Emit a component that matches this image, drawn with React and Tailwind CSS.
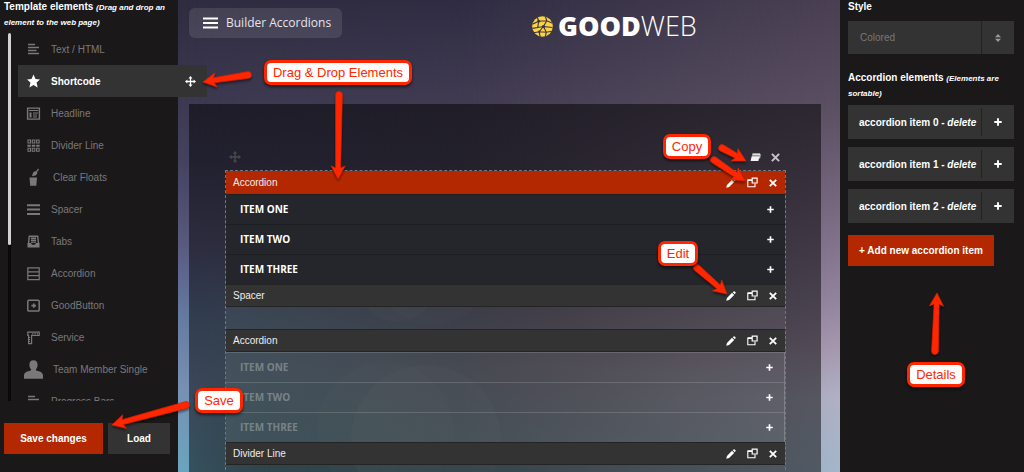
import React from "react";

const SANS = "font-['Liberation_Sans',Arial,sans-serif]";
const OPEN = "font-['Open_Sans','Noto_Sans',sans-serif]";

/* ---------- icons ---------- */

function MoveIcon({ className }) {
  return (
    <svg viewBox="0 0 12 12" className={className} fill="currentColor" aria-hidden="true">
      <path d="M6 0 8.2 2.6H6.7V5.3H9.4V3.8L12 6 9.4 8.2V6.7H6.7V9.4H8.2L6 12 3.8 9.4H5.3V6.7H2.6V8.2L0 6 2.6 3.8V5.3H5.3V2.6H3.8Z" />
    </svg>
  );
}

function PlusIcon({ className }) {
  return (
    <svg viewBox="0 0 8 8" className={className} stroke="currentColor" strokeWidth="1.9" aria-hidden="true">
      <path d="M4 .3V7.7M.3 4H7.7" />
    </svg>
  );
}

function CloseIcon({ className }) {
  return (
    <svg viewBox="0 0 8 8" className={className} stroke="currentColor" strokeWidth="1.8" aria-hidden="true">
      <path d="M.8.8 7.2 7.2M7.2.8.8 7.2" />
    </svg>
  );
}

function PencilIcon() {
  return (
    <svg viewBox="0 0 10 10" className="size-[10px]" fill="currentColor" aria-hidden="true">
      <path d="M.2 9.8 1 6.9 6 1.8 8.2 3.9 3.1 9ZM6.7 1.2 7.6.5Q8.3 0 9 .7L9.4 1.1Q10 1.7 9.5 2.3L8.8 3.2Z" />
    </svg>
  );
}

function DuplicateIcon() {
  return (
    <svg viewBox="0 0 11 11" className="size-[11px]" fill="none" stroke="currentColor" aria-hidden="true">
      <path d="M5 3H.8V9.8H8V6.6" strokeWidth="1.1" />
      <path d="M.8 3.2H5" strokeWidth="1.6" />
      <path d="M5.2 1.2H10.1V6H5.2Z" strokeWidth="1.2" />
    </svg>
  );
}

function StackIcon() {
  return (
    <svg viewBox="0 0 11 10" className="h-[10px] w-[11px]" aria-hidden="true">
      <path d="M2.5 1H10.2L9.5 5H1.8Z" fill="#9a979d" />
      <path d="M1.6 4.4H9.4L8.4 9H.6Z" fill="#f4f4f4" />
      <path d="M2.7 2.4H10.2L9.6 6.4" fill="none" stroke="#e8e8e8" strokeWidth="1" />
    </svg>
  );
}

const elementIcons = {
  text: (
    <path d="M4 4.5H11M4 7.5H15M4 10.5H12.5M4 13.5H15" stroke="currentColor" strokeWidth="1.5" />
  ),
  star: (
    <path
      d="M9.5 2.6 11.5 7 16 7.5 12.6 10.6 13.6 15.4 9.5 12.9 5.4 15.4 6.4 10.6 3 7.5 7.5 7Z"
      fill="currentColor"
    />
  ),
  headline: (
    <g fill="none" stroke="currentColor">
      <path d="M3.6 4.1H15.4V15.1H3.6Z" strokeWidth="1.4" />
      <path d="M5 6.5H14M9 9H14M9 11H13M9 13H13" strokeWidth="1.2" />
      <path d="M6.5 8.5V13.5" strokeWidth="2" />
    </g>
  ),
  divider: (
    <g fill="none" stroke="currentColor">
      <path d="M4 4H6.5V7H4ZM8.3 4H10.8V7H8.3ZM12.6 4H15.1V7H12.6ZM4 12.3H6.5V15.3H4ZM8.3 12.3H10.8V15.3H8.3ZM12.6 12.3H15.1V15.3H12.6Z" strokeWidth="1.1" />
      <path d="M3.4 9.7H15.6" strokeWidth="2" strokeDasharray="3.4 1" />
    </g>
  ),
  clear: (
    <g fill="currentColor">
      <path d="M5.5 9.5H13L12.3 17.8H6.2Z" />
      <path d="M8 8.2 9 4.8 11 2.9 12 3.6 14 .6 15 1.4 13 4.3 13.4 5.6 11.6 7.4Z" />
    </g>
  ),
  spacer: (
    <path d="M3 5.2H16M3 9.6H16M3 14H16" stroke="currentColor" strokeWidth="2" />
  ),
  tabs: (
    <g fill="none" stroke="currentColor">
      <path d="M4.5 12 5.3 4.2H13.7L14.5 12" strokeWidth="1.4" />
      <path d="M7 6.3H12M7 8.2H12M7 10.1H12" strokeWidth="1.4" />
      <path d="M3.5 11H7L8 12.8H11L12 11H15.5V15.6H3.5Z" fill="currentColor" stroke="none" />
    </g>
  ),
  accordion: (
    <path
      d="M3.8 3.9H15.2V15.6H3.8ZM3.8 7.8H15.2M3.8 11.7H15.2"
      fill="none"
      stroke="currentColor"
      strokeWidth="1.2"
    />
  ),
  button: (
    <g fill="none" stroke="currentColor">
      <rect x="3.8" y="4.3" width="11.4" height="10.8" rx="1.2" strokeWidth="1.5" />
      <path d="M7.4 9.7H12M9.8 7.6V11.8" strokeWidth="1.7" />
    </g>
  ),
  service: (
    <g fill="none" stroke="currentColor">
      <path d="M3.8 4.2H15.2V7.4H7.6V15.6H4.6V7.4H3.8Z" strokeWidth="1.2" />
      <path d="M4.6 9.5H7M4.6 11.5H7M4.6 13.5H7M8 5.8H14" strokeWidth="1.1" strokeDasharray="1.4 1" />
    </g>
  ),
  person: (
    <path
      d="M9.5.2C12.3.2 13.7 2.2 13.6 5 13.5 7 12.8 8.4 12 9.2V10.6C15.6 11.4 19 12.4 19 15.5V18.8H0V15.5C0 12.4 3.4 11.4 7 10.6V9.2C6.2 8.4 5.5 7 5.4 5 5.3 2.2 6.7.2 9.5.2Z"
      fill="currentColor"
    />
  ),
  progress: (
    <path d="M4 4.5H11M4 7.5H15M4 10.5H12.5M4 13.5H15" stroke="currentColor" strokeWidth="1.5" />
  ),
};

/* ---------- left sidebar ---------- */

const elements = [
  { icon: "text", label: "Text / HTML" },
  { icon: "star", label: "Shortcode", active: true },
  { icon: "headline", label: "Headline" },
  { icon: "divider", label: "Divider Line" },
  { icon: "clear", label: "Clear Floats", wide: true },
  { icon: "spacer", label: "Spacer" },
  { icon: "tabs", label: "Tabs" },
  { icon: "accordion", label: "Accordion" },
  { icon: "button", label: "GoodButton" },
  { icon: "service", label: "Service" },
  { icon: "person", label: "Team Member Single", wide: true },
  { icon: "progress", label: "Progress Bars" },
];

function ElementRow({ icon, label, active, wide }) {
  const tone = active
    ? "w-full bg-[#333333] pr-[11px] font-bold text-white"
    : "w-[160px] text-[#7a7879]";
  return (
    <li>
      <button type="button" className={`flex h-[32px] items-center pl-[6px] text-left text-[10px] ${tone}`}>
        <svg viewBox="0 0 19 19" className="size-[19px] shrink-0" aria-hidden="true">
          {elementIcons[icon]}
        </svg>
        <span className={wide ? "ml-[10px]" : "ml-[8px]"}>{label}</span>
        {active && <MoveIcon className="ml-auto size-[11px]" />}
      </button>
    </li>
  );
}

function ElementsSidebar() {
  return (
    <aside className="relative z-10 flex w-[178px] shrink-0 flex-col bg-[#1a1819]">
      <h2 className="px-[4px] text-[10px] leading-[14px] font-bold text-white">
        Template elements <em className="text-[8px]">(Drag and drop an element to the web page)</em>
      </h2>
      <div className="mt-[3px] -mr-[29px] flex h-[368px] overflow-hidden pl-[8px]">
        <div className="w-[3px] shrink-0 bg-[#0a0909]">
          <div className="h-[212px] rounded-full bg-[#d2d2d2]" />
        </div>
        <ul className="ml-[7px] grow">
          {elements.map((e) => (
            <ElementRow key={e.label} {...e} />
          ))}
        </ul>
      </div>
      <div className="mt-[22px] flex gap-[5px] px-[4px] text-[10px] font-bold text-white">
        <button type="button" className="h-[31px] w-[99px] bg-[#b32800]">Save changes</button>
        <button type="button" className="h-[31px] w-[62px] bg-[#333333]">Load</button>
      </div>
    </aside>
  );
}

/* ---------- canvas ---------- */

function BlockHeader({ title, tone }) {
  return (
    <div className={`flex h-[23px] items-center justify-between border-y pr-[8px] pl-[7px] text-[10px] text-[#eeeeee] ${tone}`}>
      <span>{title}</span>
      <span className="flex items-center gap-[11px] text-white">
        <button type="button" aria-label="Edit"><PencilIcon /></button>
        <button type="button" aria-label="Copy"><DuplicateIcon /></button>
        <button type="button" aria-label="Remove"><CloseIcon className="size-[8px]" /></button>
      </span>
    </div>
  );
}

const items = ["ITEM ONE", "ITEM TWO", "ITEM THREE"];

function ItemList({ listTone, rowTone, textTone }) {
  return (
    <ul className={`${OPEN} ${listTone}`}>
      {items.map((label) => (
        <li key={label}>
          <button
            type="button"
            className={`flex h-[30px] w-full items-center justify-between border-t pr-[11px] pl-[14px] text-[10px] font-bold ${rowTone}`}
          >
            <span className={textTone}>{label}</span>
            <PlusIcon className="size-[7px] text-white" />
          </button>
        </li>
      ))}
    </ul>
  );
}

const DARK = "border-[#242424] bg-[#333333]";

function Backdrop() {
  return (
    <div className="absolute inset-0 bg-[linear-gradient(to_bottom,#2f2c40_0%,#3c3850_20%,#45425f_34%,#5a5a80_52%,#6479a0_66%,#7890b4_82%,#6ba5bf_100%)]">
      <div className="absolute inset-0 bg-[linear-gradient(to_bottom,#5b7f8c00_50%,#5f8b9a_95%)] [mask-image:linear-gradient(to_right,transparent_2%,black_12%)]" />
      <div className="absolute inset-0 bg-[linear-gradient(to_bottom,#302d44_0%,#403b50_20%,#484254_36%,#5c5468_60%,#75717f_78%,#6d8794_100%)] [mask-image:linear-gradient(to_right,transparent_0%,black_60%)]" />
      <div className="absolute inset-0 bg-[linear-gradient(to_bottom,#4a4052_0%,#5b4f62_22%,#75667e_42%,#92839d_63%,#a596ae_73%,#b0b0c4_84%,#a4b6ca_100%)] [mask-image:linear-gradient(to_right,transparent_42%,black_100%)]" />
      <svg className="absolute inset-0 size-full" aria-hidden="true">
        <circle cx="219" cy="283" r="39" fill="#fff" fillOpacity=".04" />
        <circle cx="248" cy="440" r="75" fill="#fff" fillOpacity=".05" />
        <circle cx="207" cy="430" r="68" fill="#fff" fillOpacity=".03" />
        <circle cx="255" cy="267" r="58" fill="#fff" fillOpacity=".03" />
      </svg>
    </div>
  );
}

function Logo() {
  return (
    <a href="#home" className={`${OPEN} ml-[190px] flex items-center text-white`}>
      <svg viewBox="0 0 22 22" className="size-[21px]" aria-hidden="true">
        <circle cx="11" cy="11" r="10.8" fill="#fdd440" />
        <g fill="none" stroke="#3a3649" strokeWidth="1.2">
          <path d="M.5 8.5 7 5.5 15.5 5 21.5 7.5M7 5.5 5.5 1M15.5 5 12 11 21.5 12M15.5 5 14 .5M7 5.5 6 12 .5 13M12 11 6 12M12 11 7.5 16.5 2 17.5M7.5 16.5 8.5 21.5M7.5 16.5 15 17 20.5 16M15 17 14 21.5M12 11 15 17" />
        </g>
        <g fill="#3a3649">
          <circle cx="7" cy="5.5" r="1.5" />
          <circle cx="12" cy="11" r="1.7" />
          <circle cx="7.5" cy="16.5" r="1.2" />
        </g>
      </svg>
      <span className="ml-[5px] text-[27px] leading-[30px] font-extrabold">
        GOOD<span className="font-light">WEB</span>
      </span>
    </a>
  );
}

function Canvas() {
  return (
    <main className="relative flex min-w-0 grow flex-col pr-[19px] pl-[11px]">
      <Backdrop />
      <header className="relative flex items-start pt-[8px]">
        <button
          type="button"
          className={`${OPEN} flex h-[30px] w-[153px] shrink-0 items-center rounded-[6px] bg-white/10 pl-[14px] text-[12px] text-[#e6e5ea]`}
        >
          <svg viewBox="0 0 15 12" className="mr-[8px] h-[12px] w-[15px]" stroke="#fff" strokeWidth="2.2" aria-hidden="true">
            <path d="M0 1.5H15M0 6H15M0 10.5H15" />
          </svg>
          Builder Accordions
        </button>
        <div className="pt-[3px]">
          <Logo />
        </div>
      </header>
      <section className="relative mt-[63px] grow bg-black/50 pr-[35px] pl-[36px]">
        <div className="mt-[47px] flex h-[12px] items-center pr-[6px] pl-[4px]">
          <MoveIcon className="size-[12px] text-[#4a494f]" />
          <button type="button" aria-label="Copy section" className="mr-[10px] ml-auto">
            <StackIcon />
          </button>
          <button type="button" aria-label="Remove section">
            <CloseIcon className="size-[9px] text-[#c4c3c8]" />
          </button>
        </div>
        <div className="mt-[7px] h-[310px] border border-dashed border-[#77767c]">
          <BlockHeader title="Accordion" tone="border-[#b32800] bg-[#b32800]" />
          <ItemList listTone="bg-[#25262b]" rowTone="border-[#1d1e22]" textTone="text-white" />
          <BlockHeader title="Spacer" tone={DARK} />
          <div className="h-[22px] bg-white/5" />
          <BlockHeader title="Accordion" tone={DARK} />
          <ItemList
            listTone="border-r border-white/20 bg-white/7"
            rowTone="border-white/15"
            textTone="text-white/30"
          />
          <BlockHeader title="Divider Line" tone={DARK} />
        </div>
      </section>
    </main>
  );
}

/* ---------- right sidebar ---------- */

function DetailsSidebar() {
  return (
    <aside className="w-[184px] shrink-0 bg-[#1a1819] pr-[10px] pl-[8px] text-[10px] font-bold text-white">
      <label htmlFor="style" className="block leading-[14px]">Style</label>
      <div className="mt-[7px] flex h-[33px] items-center bg-[#333333] text-[#777777]">
        <select id="style" className="h-full grow appearance-none pl-[12px] font-normal outline-none">
          <option>Colored</option>
        </select>
        <span className="flex h-full w-[33px] items-center justify-center border-l border-[#222222] text-[#9a9a9a]">
          <svg viewBox="0 0 6 8" className="h-[8px] w-[6px]" fill="currentColor" aria-hidden="true">
            <path d="M3 0 6 3.2H0ZM3 8 0 4.8H6Z" />
          </svg>
        </span>
      </div>
      <h2 className="mt-[17px] leading-[14px]">
        Accordion elements <em className="text-[8px]">(Elements are sortable)</em>
      </h2>
      <ul className="mt-[4px] flex flex-col gap-[8px]">
        {[0, 1, 2].map((n) => (
          <li key={n} className="flex h-[34px] items-center bg-[#333333] pl-[11px]">
            <span className="grow whitespace-nowrap">
              accordion item {n} - <button type="button" className="italic">delete</button>
            </span>
            <button
              type="button"
              aria-label={`Expand item ${n}`}
              className="flex h-[28px] w-[33px] items-center justify-center border-l border-[#222222]"
            >
              <PlusIcon className="size-[8px]" />
            </button>
          </li>
        ))}
      </ul>
      <button type="button" className="mt-[12px] h-[31px] w-[146px] bg-[#b32800]">
        + Add new accordion item
      </button>
    </aside>
  );
}

/* ---------- annotations ---------- */

const arrows = [
  [248, 75, 203, 82],
  [339, 95, 338, 179],
  [722, 148, 746, 161],
  [714, 160, 745, 181],
  [697, 268, 727, 294],
  [935, 351, 937, 293],
  [186, 405, 112, 425],
];

function Arrow({ from: [x1, y1, x2, y2] }) {
  const length = Math.hypot(x2 - x1, y2 - y1);
  const angle = (Math.atan2(y2 - y1, x2 - x1) * 180) / Math.PI;
  const neck = length - 11;
  return (
    <path
      transform={`translate(${x1} ${y1}) rotate(${angle})`}
      d={`M0 -3.4 L${neck} -2.5 L${neck - 2} -7 L${length} 0 L${neck - 2} 7 L${neck} 2.5 L0 3.4 A3.4 3.4 0 0 1 0 -3.4Z`}
      fill="#ff2600"
      stroke="#dd2200"
      strokeWidth=".7"
      strokeLinejoin="round"
    />
  );
}

function Callout({ className, children }) {
  return (
    <span
      className={`absolute flex h-[25px] items-center justify-center rounded-[7px] border-[3px] border-[#ff2600] bg-white text-[13px] whitespace-nowrap text-[#ff2600] shadow-[0_2px_3px_rgba(0,0,0,0.6)] ${className}`}
    >
      {children}
    </span>
  );
}

function Annotations() {
  return (
    <div className="pointer-events-none absolute inset-0 z-20">
      <svg className="absolute inset-0 size-full drop-shadow-[0_2px_1px_rgba(0,0,0,0.45)]" aria-hidden="true">
        {arrows.map((a) => (
          <Arrow key={a.join()} from={a} />
        ))}
      </svg>
      <Callout className="top-[60px] left-[264px] w-[148px]">Drag &amp; Drop Elements</Callout>
      <Callout className="top-[134px] left-[663px] w-[48px]">Copy</Callout>
      <Callout className="top-[241px] left-[658px] w-[40px]">Edit</Callout>
      <Callout className="top-[362px] left-[907px] w-[58px]">Details</Callout>
      <Callout className="top-[388px] left-[195px] w-[48px]">Save</Callout>
    </div>
  );
}

export default function App() {
  return (
    <div className={`${SANS} relative flex h-screen overflow-hidden bg-[#1a1819]`}>
      <ElementsSidebar />
      <Canvas />
      <DetailsSidebar />
      <Annotations />
    </div>
  );
}
